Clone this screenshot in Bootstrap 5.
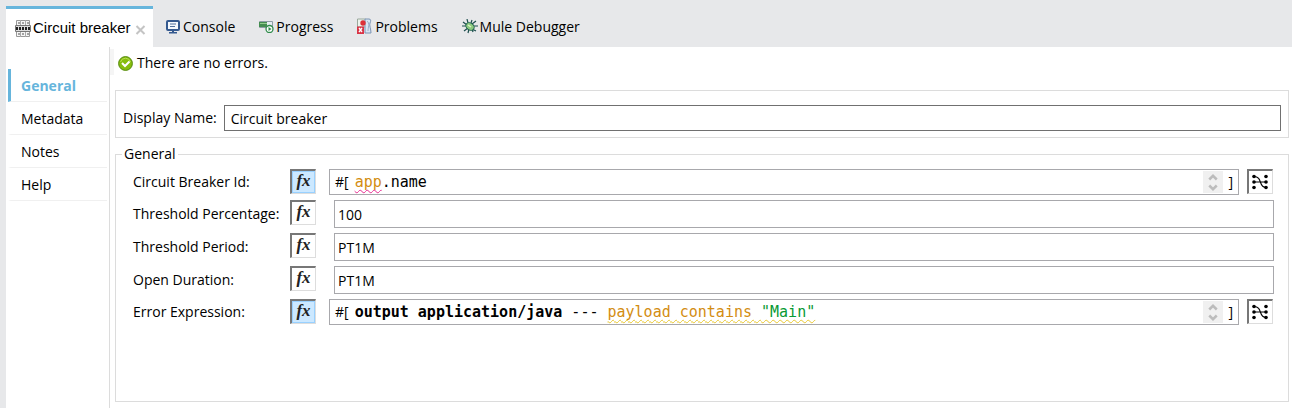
<!DOCTYPE html>
<html lang="en">
<head>
<meta charset="utf-8">
<meta name="viewport" content="width=device-width, initial-scale=1">
<title>Circuit breaker</title>
<link rel="stylesheet" href="https://cdn.jsdelivr.net/npm/bootstrap@5.3.0/dist/css/bootstrap.min.css">
<style>
body{font-family:"Open Sans","Noto Sans",sans-serif;font-size:14px;line-height:20px;color:#000;background:#e7e8ea}
.tabstrip{height:47px;padding:6px 6px 0;gap:24px;flex-wrap:nowrap;border:0}
.tabstrip .nav-link{display:flex;align-items:center;gap:2px;height:41px;padding:0;border:0;border-radius:0;color:#000;background:none;white-space:nowrap}
.tabstrip .nav-link.active{width:147px;margin-right:-11px;padding:0 8px 0 9px;border-top:3px solid #66b5dc;background:#fff;color:#000;font-family:"Liberation Sans",sans-serif;font-size:15px}
.close-tab{color:#c4c4c4;margin-left:1px;padding-top:3px}
.shell{margin-left:6px}
.sidebar{width:104px;padding:22px 2px 0;border-right:1px solid #dcdcdc}
.sidebar .nav-link{height:33px;padding:0 0 0 10px;border-left:3px solid transparent;border-bottom:1px solid #f0f0f0;border-radius:0;color:#000;line-height:34px}
.sidebar .nav-link.active{border-left-color:#66b5dc;background:none;color:#66b5dc;font-weight:700}
.content{padding:2px 3px 6px 0}
.status{height:26px;padding:2px 0 0 4px;border-left:4px solid #f5f5f5}
.panel{margin-left:5px;border:1px solid #dcdcdc}
.name-panel{height:48px;margin-top:15px;padding:8px 7px 0 7px;gap:7px}
.props{margin-top:6px;padding:0 14px 0 17px}
.props legend{font-size:14px;line-height:20px;margin:0 0 0 -11px;padding:0 2px}
.rows{gap:5px;padding-top:5px}
.props .field-label{width:157px}
.text-field{border:1px solid #a8a8ac;border-radius:0;height:28px;padding:0 4px;color:#000;font-size:14px;background:#fff;min-width:0}
.text-field:focus{outline:1px solid #66b5dc}
.name-field{height:26px;border-color:#707070;padding:0 6px}
.plain{margin-left:18px;padding:0 3px}
.fx-btn{width:26px;height:25px;padding:0 0 2px;flex:none;background:#fff;border:solid;border-width:2px 1px 1px 2px;border-color:#777 #ddd #ddd #777;font-family:"Liberation Serif",serif;font-style:italic;font-weight:700;font-size:17px;line-height:18px;color:#222}
.fx-btn.pressed{background:#cce8ff;box-shadow:inset 0 0 0 1px #99d1ff}
.expr{height:26px;margin-left:13px;border:1px solid #a8a8ac;padding:0 5px}
.code{margin-left:6px;font-family:"DejaVu Sans Mono",monospace;font-size:15px;line-height:24px;white-space:pre;outline:0}
.tok{color:#d38d12}
.str{color:#099a35}
.squig{text-decoration:underline wavy 1px #e9c730;text-decoration-skip-ink:none;text-underline-offset:2px}
.squig.err{text-decoration-color:#e82c91}
.spin{width:20px;height:22px;background:#f0f0f0;margin-right:5px}
.spin button{height:11px;padding:0;border:0;background:none;display:flex;align-items:center;justify-content:center}
.map-btn{margin-left:8px;margin-right:1px;padding:0 1px 0 0;display:flex;align-items:center;justify-content:center}
</style>
</head>
<body class="d-flex flex-column min-vh-100">
<svg class="d-none" aria-hidden="true">
  <symbol id="map" viewBox="0 0 18 16"><path d="M3 2.500C12 2.500 7 13.500 15 13.500M3 8h12" fill="none" stroke="#000" stroke-width="1.100"/><g><circle cx="3" cy="2.500" r="1.800"/><circle cx="3" cy="8" r="1.800"/><circle cx="3" cy="13.500" r="1.800"/><circle cx="15" cy="2.500" r="1.800"/><circle cx="15" cy="8" r="1.800"/><circle cx="15" cy="13.500" r="1.800"/></g></symbol>
  <symbol id="up" viewBox="0 0 8 6"><path d="M1 5l3-3 3 3" fill="none" stroke="#bcbcbc" stroke-width="2"/></symbol>
  <symbol id="down" viewBox="0 0 8 6"><path d="M1 1l3 3 3-3" fill="none" stroke="#bcbcbc" stroke-width="2"/></symbol>
</svg>

<nav class="nav nav-tabs tabstrip" aria-label="Views">
  <a class="nav-link active" href="#breaker">
    <svg class="flex-shrink-0" width="16" height="17" viewBox="0 0 16 17"><path d="M1.500 .5h13v16h-13z" fill="#f6f6f6" stroke="#999"/><path d="M5.500 0v17M10.500 0v17" stroke="#aaa"/><path d="M.5 5.500h15v6H.5z" fill="#ddd" stroke="#777"/><path d="M1 8.500h14" stroke="#222" stroke-width="3" stroke-dasharray="2 1"/><path d="M3 3h2M7 3h2M12 3h2M3 14h2M7 14h2M12 14h2" stroke="#888" stroke-width="1.500"/></svg>
    <span>Circuit breaker</span>
    <svg class="close-tab flex-shrink-0" width="13" height="14" viewBox="0 0 10 11"><path d="M1 2l8 8M9 2l-8 8" stroke="currentColor" stroke-width="2"/></svg>
  </a>
  <a class="nav-link" href="#console">
    <svg width="15" height="14" viewBox="0 0 15 14"><rect x="1" y="1" width="12" height="9" rx="1" fill="#f4f8fd" stroke="#34598f" stroke-width="2"/><path d="M4 4h6M4 6.500h5" stroke="#50709d"/><path d="M6 10h2v2H6zM3 12h8v1.500H3z" fill="#34598f"/></svg>
    <span>Console</span>
  </a>
  <a class="nav-link" href="#progress">
    <svg width="15" height="13" viewBox="0 0 15 13"><path d="M.5 1.500h13v6H.5z" fill="#e6eef2" stroke="#8d9da5"/><path d="M0 2h8v5H0z" fill="#438d50"/><path d="M1 3.500h7" stroke="#91ca8c"/><circle cx="10.500" cy="9" r="3.500" fill="#fff" stroke="#2f8b4b" stroke-width="1.300"/><path d="M9.500 7v4l3-2z" fill="#2f8b4b"/></svg>
    <span>Progress</span>
  </a>
  <a class="nav-link" href="#problems">
    <svg width="16" height="17" viewBox="0 0 16 17"><path d="M.5 1h8v8h-8z" fill="#edf3ed" stroke="#9aa99c"/><path d="M8 1h4c2 0 2 2 1 4-1 2 1 6 1 10H8z" fill="#d9e5f3" stroke="#7b94b4"/><path d="M10 3c3 2 1 7 1 10" fill="none" stroke="#9db1c9"/><circle cx="6" cy="5" r="2.700" fill="#dc3038"/><path d="M0 8.500h7v7.500H0z" fill="#d93547"/><path d="M2 10l3 4M5 10l-3 4" stroke="#fff" stroke-width="1.300"/></svg>
    <span>Problems</span>
  </a>
  <a class="nav-link" href="#debugger">
    <svg width="16" height="16" viewBox="0 0 16 16"><path d="M5 0l1 4M10 1L9 4M1 3l4 3M0 7h5M2 12l4-3M6 14l1-4M11 13l-1-3M10 10l4 2M10 7h6M10 5l4-3" stroke="#1d4e4e" stroke-width="1.200"/><ellipse cx="8" cy="7.500" rx="4.500" ry="3.400" transform="rotate(35 8 7.500)" fill="#8cca7f" stroke="#1f6050"/><path d="M6 6l3 2" stroke="#def3c9" stroke-width="1.500"/></svg>
    <span>Mule Debugger</span>
  </a>
</nav>

<div class="shell d-flex flex-grow-1 bg-white">
  <nav class="sidebar nav flex-column flex-nowrap flex-shrink-0" aria-label="Sections">
    <a class="nav-link active" href="#general">General</a>
    <a class="nav-link" href="#metadata">Metadata</a>
    <a class="nav-link" href="#notes">Notes</a>
    <a class="nav-link" href="#help">Help</a>
  </nav>
  <main class="content d-flex flex-column flex-grow-1">
    <div class="status d-flex align-items-center gap-1" role="status">
      <svg width="15" height="15" viewBox="0 0 15 15"><circle cx="7.500" cy="7.500" r="6.900" fill="#86bd0d" stroke="#568b10"/><path d="M2.500 6a5.200 5.200 0 0 1 10 0" fill="none" stroke="#b9dc52"/><path d="M4 7l3 3 4.500-4.500" fill="none" stroke="#fff" stroke-width="2"/></svg>
      <span>There are no errors.</span>
    </div>
    <div class="panel name-panel d-flex align-items-center">
      <label for="displayName" class="flex-shrink-0">Display Name:</label>
      <input id="displayName" class="text-field name-field flex-grow-1" value="Circuit breaker">
    </div>
    <fieldset class="panel props flex-grow-1">
      <legend class="w-auto float-none">General</legend>
      <div class="rows d-flex flex-column">
        <div class="d-flex">
          <label id="idLabel" for="idFx" class="field-label align-self-center">Circuit Breaker Id:</label>
          <button id="idFx" type="button" class="fx-btn pressed" aria-pressed="true">fx</button>
          <div class="expr d-flex align-items-center flex-grow-1"><span>#[</span><div class="code flex-grow-1" role="textbox" contenteditable="true" spellcheck="false" aria-labelledby="idLabel"><span class="tok squig err">app</span>.name</div><span class="spin"><button type="button" class="w-100" aria-label="Scroll up"><svg width="10" height="8"><use href="#up"/></svg></button><button type="button" class="w-100" aria-label="Scroll down"><svg width="10" height="8"><use href="#down"/></svg></button></span><span>]</span></div>
          <button type="button" class="fx-btn map-btn" aria-label="Map"><svg width="18" height="16"><use href="#map"/></svg></button>
        </div>
        <div class="d-flex">
          <label for="percentage" class="field-label align-self-center">Threshold Percentage:</label>
          <button type="button" class="fx-btn">fx</button>
          <input id="percentage" class="text-field plain flex-grow-1" value="100">
        </div>
        <div class="d-flex">
          <label for="period" class="field-label align-self-center">Threshold Period:</label>
          <button type="button" class="fx-btn">fx</button>
          <input id="period" class="text-field plain flex-grow-1" value="PT1M">
        </div>
        <div class="d-flex">
          <label for="duration" class="field-label align-self-center">Open Duration:</label>
          <button type="button" class="fx-btn">fx</button>
          <input id="duration" class="text-field plain flex-grow-1" value="PT1M">
        </div>
        <div class="d-flex">
          <label id="errLabel" for="errFx" class="field-label align-self-center">Error Expression:</label>
          <button id="errFx" type="button" class="fx-btn pressed" aria-pressed="true">fx</button>
          <div class="expr d-flex align-items-center flex-grow-1"><span>#[</span><div class="code flex-grow-1" role="textbox" contenteditable="true" spellcheck="false" aria-labelledby="errLabel"><b>output application/java</b> --- <span class="tok squig">payload contains <span class="str">"Main"</span></span></div><span class="spin"><button type="button" class="w-100" aria-label="Scroll up"><svg width="10" height="8"><use href="#up"/></svg></button><button type="button" class="w-100" aria-label="Scroll down"><svg width="10" height="8"><use href="#down"/></svg></button></span><span>]</span></div>
          <button type="button" class="fx-btn map-btn" aria-label="Map"><svg width="18" height="16"><use href="#map"/></svg></button>
        </div>
      </div>
    </fieldset>
  </main>
</div>
<script src="https://cdn.jsdelivr.net/npm/bootstrap@5.3.0/dist/js/bootstrap.bundle.min.js"></script>
</body>
</html>
